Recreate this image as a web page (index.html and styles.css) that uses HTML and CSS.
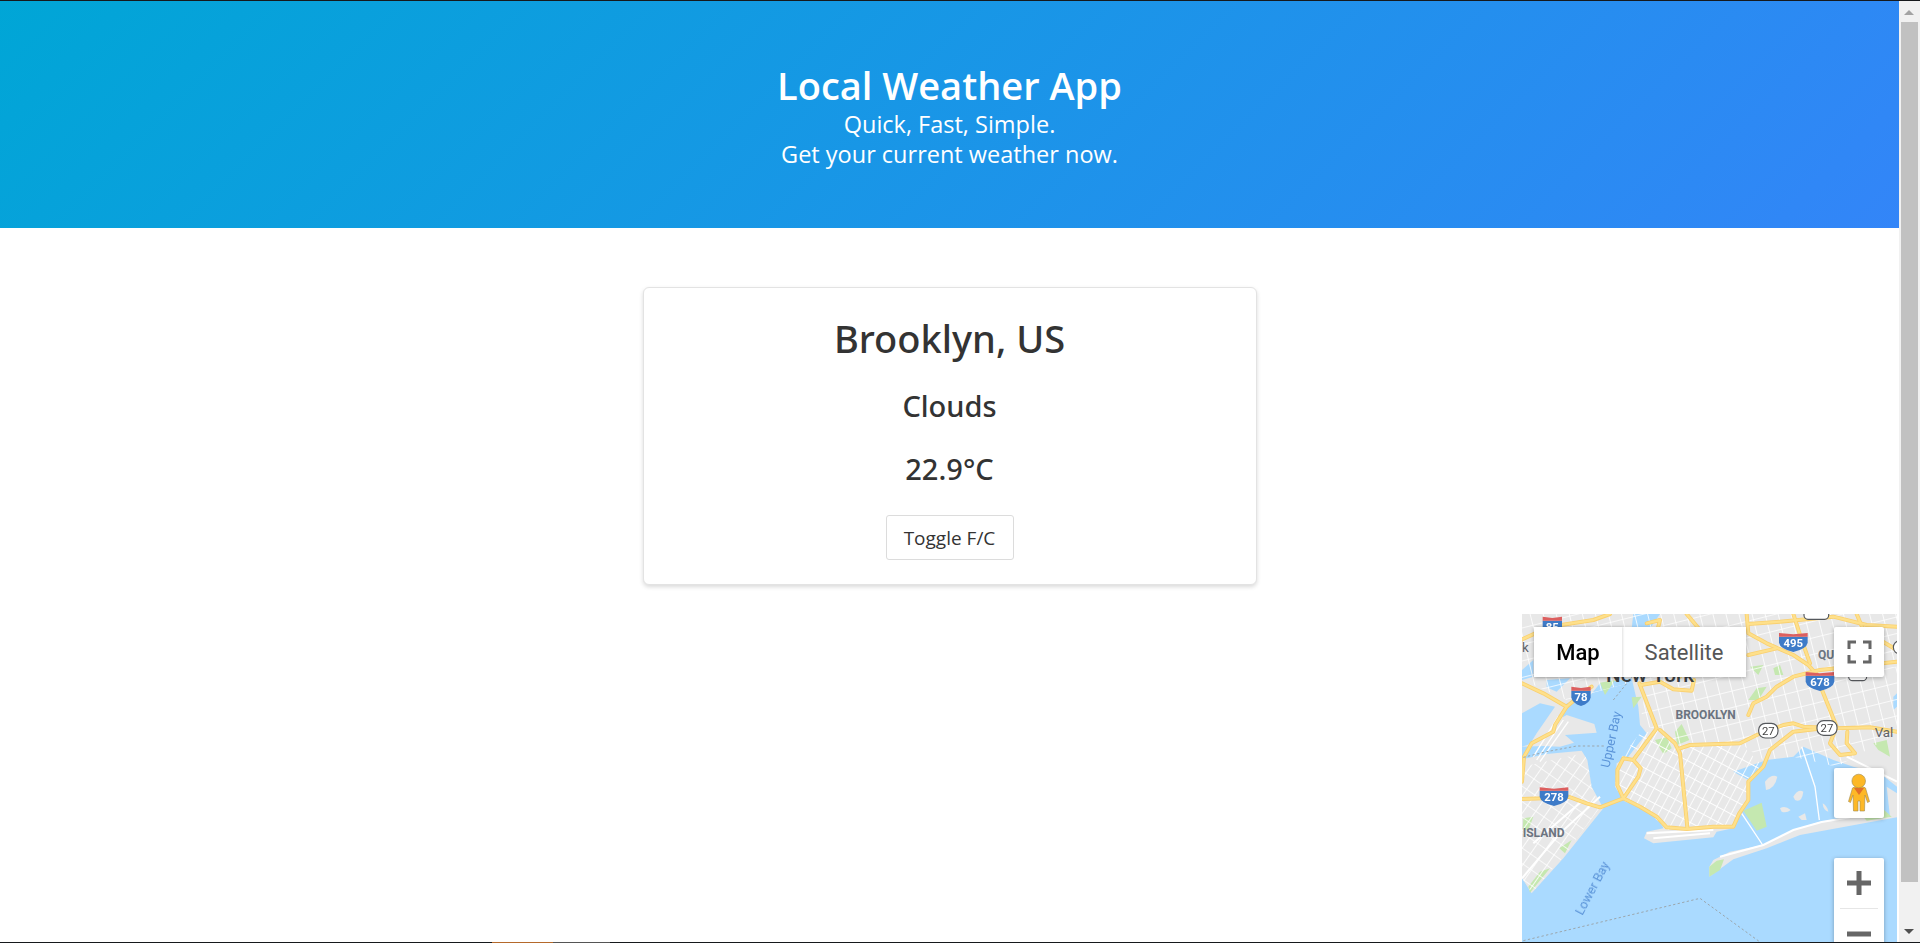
FILE: index.html
```html
<!DOCTYPE html>
<html lang="en">
<head>
<meta charset="utf-8">
<title>Local Weather App</title>
<link rel="stylesheet" href="styles.css">
</head>
<body>
<div class="viewport">
  <div class="page">
    <header class="hero">
      <h1 class="hero-title">Local Weather App</h1>
      <p class="hero-line">Quick, Fast, Simple.</p>
      <p class="hero-line">Get your current weather now.</p>
    </header>
    <main class="content">
      <section class="card">
        <h2 class="city">Brooklyn, US</h2>
        <h3 class="reading">Clouds</h3>
        <h3 class="reading">22.9°C</h3>
        <button class="toggle" type="button">Toggle F/C</button>
      </section>
      <div class="map">
        <svg class="map-art" viewBox="66 42 1125 984" width="375" height="328" aria-hidden="true">
          <defs>
            <pattern id="gridA" width="24" height="40" patternUnits="userSpaceOnUse" patternTransform="rotate(28)">
              <path class="grid-line" d="M0 0H24M0 0V40"/>
            </pattern>
            <pattern id="gridB" width="38" height="48" patternUnits="userSpaceOnUse" patternTransform="rotate(-14)">
              <path class="grid-line" d="M0 0H38M0 0V48"/>
            </pattern>
            <pattern id="gridC" width="30" height="38" patternUnits="userSpaceOnUse" patternTransform="rotate(35)">
              <path class="grid-line" d="M0 0H30M0 0V38"/>
            </pattern>
            <g id="highways">
              <path d="M66 597L130 595 205 590 260 610 300 622 370 595 415 530 422 505 400 480 370 475 352 510 352 555 370 595 420 620 470 650 500 682 560 687 640 680 700 680 718 640 745 600 745 545 790 500 810 450 880 395 950 387"/>
              <path d="M480 390L525 430 540 460 562 682"/>
              <path d="M418 250L470 385 400 480"/>
              <path d="M540 445L570 435 720 430 770 405 850 375 880 370 910 380 1010 385 1110 382 1190 395"/>
              <path d="M960 255L1010 380 990 430 1020 465 1065 460 1040 430 1042 395"/>
              <path d="M745 345L760 310 800 290 830 260 880 230 960 210 1190 185"/>
              <path d="M66 118L150 80 280 60 330 42"/>
              <path d="M740 42L745 100 800 130 880 165 925 195 960 235"/>
              <path d="M745 72L840 65 1000 50 1100 75 1190 80"/>
              <path d="M880 42L905 120 930 190"/>
              <path d="M745 165L830 145"/>
              <path d="M66 250L130 280 200 320 235 290 275 260"/>
              <path d="M200 320L165 375 160 395 95 430 72 470 66 545"/>
              <path d="M422 255L480 245 520 268 575 272 582 240"/>
              <path d="M1070 42L1090 90 1190 150"/>
              <path d="M560 42L600 90 540 230"/>
              <path d="M440 70L480 60 470 100"/>
            </g>
          </defs>
          <rect class="land" x="66" y="42" width="1125" height="984"/>
          <path class="water" d="M66 1026V835L95 880 190 775 310 625 275 560 262 480 245 452 140 462 66 478V440L130 438 180 440 222 428 195 405 290 398 283 372 200 345 188 352 200 310 260 300 300 250 395 235 415 320 420 375 440 400 385 470 350 490 345 560 375 605 430 620 480 660 490 685 440 695 432 715 460 730 640 712 650 695 700 685 720 632 745 590 745 540 700 515 730 505 800 480 880 470 910 440 1000 480 1060 500 1140 520 1191 560V1026Z"/>
          <path class="water" d="M66 340L120 310 165 320 110 400 90 432 66 440Z"/>
          <path class="water" d="M140 240L210 235 170 275 140 262Z"/>
          <path class="water" d="M400 42H480L440 100 395 85Z"/>
          <path class="water" d="M66 210L100 180 100 230 66 240Z"/>
          <path class="water" d="M1180 290L1191 280V320L1180 330Z"/>
          <path class="land" d="M628 800L640 780 690 755 790 735 880 690 960 665 1040 652 1191 645V652L1100 668 900 705 800 745 700 778 628 830Z"/>
          <path class="land" d="M795 545Q815 520 832 530 825 565 798 570Z"/>
          <path class="land" d="M880 590Q895 565 910 575 905 610 885 600Z"/>
          <path class="land" d="M840 625Q855 615 872 630 860 640 845 635Z"/>
          <path class="land" d="M895 650L915 640 920 660 905 660Z"/>
          <path class="land" d="M968 610Q980 615 985 635 970 632 968 610Z"/>
          <path class="land" d="M1160 560L1191 580V650H1170Z"/>
          <path class="park" d="M730 632L785 608 800 680 770 692Z"/>
          <path class="park" d="M628 800L650 782 672 778 660 810 628 830Z"/>
          <path class="park" d="M465 420L500 412 515 445 490 462Z"/>
          <path class="park" d="M545 372L568 420 532 435 525 395Z"/>
          <path class="park" d="M395 292L425 290 400 325Z"/>
          <path class="park" d="M300 248L345 240 315 285Z"/>
          <path class="park" d="M85 860L120 815 150 805 90 878Z"/>
          <path class="park" d="M70 655L100 650 85 690 68 690Z"/>
          <path class="park" d="M178 745L215 720 195 760Z"/>
          <path class="park" d="M1090 650L1150 628 1175 650 1100 662Z"/>
          <path class="park" d="M750 200L790 195 775 225Z"/>
          <path class="park" d="M820 205L840 195 850 225 825 225Z"/>
          <path class="park" d="M770 265L800 260 775 300 745 300Z"/>
          <path class="park" d="M1120 430L1160 420 1170 470 1135 450Z"/>
          <path class="grid-a" d="M420 400L480 390 540 440 720 430 790 500 745 545 745 600 700 680 500 690 430 620 375 605 345 560 350 490Z"/>
          <path class="grid-b" d="M440 240L1191 200V400L1010 500 880 470 790 480 720 430 540 440 480 390 420 375Z"/>
          <path class="grid-c" d="M66 500L250 460 262 480 275 560 300 622 190 770 95 880 66 835Z"/>
          <path class="grid-b" d="M66 42H1191V190L700 230 420 240 200 300 66 240Z"/>
          <path class="road" d="M440 700L640 690M460 715L630 700M660 770L790 735 880 690 965 666 1050 652M66 835L180 700 300 590M100 730L250 600M1040 470L1191 545"/>
          <path class="road-thin" d="M190 360L110 480M175 350L100 470M205 365L120 485M790 738L725 640M958 660L945 560 905 440"/>
          <use href="#highways" class="hwy-case"/>
          <use href="#highways" class="hwy-fill"/>
          <path class="boundary" d="M70 472L140 455 230 438 312 438M340 300L395 232M70 1022L600 895 780 1026"/>
          <text class="label label-dark" x="450" y="246" text-anchor="middle">New York</text>
          <text class="label label-bold" x="617" y="358" text-anchor="middle">BROOKLYN</text>
          <text class="label label-bold" x="954" y="178">QU</text>
          <text class="label label-bold" x="68" y="711">ISLAND</text>
          <text class="label label-place" x="1124" y="412">Val</text>
          <text class="label label-place" x="66" y="157">k</text>
          <text class="label label-water" transform="translate(328 505) rotate(-78)">Upper Bay</text>
          <text class="label label-water" transform="translate(247 948) rotate(-62)">Lower Bay</text>
          <g>
            <path class="shield-blue" d="M128 62H186V82Q184 100 157 108 130 100 128 82Z"/>
            <path class="shield-red" d="M128 50L157 54 186 50V62H128Z"/>
            <text class="shield-text" x="157" y="92" text-anchor="middle">85</text>
          </g>
          <g>
            <path class="shield-blue" d="M214 272H272V292Q270 310 243 318 216 310 214 292Z"/>
            <path class="shield-red" d="M214 260L243 264 272 260V272H214Z"/>
            <text class="shield-text" x="243" y="302" text-anchor="middle">78</text>
          </g>
          <g>
            <path class="shield-blue" d="M119 572H205V590Q202 608 162 618 122 608 119 590Z"/>
            <path class="shield-red" d="M119 562L162 566 205 562V572H119Z"/>
            <text class="shield-text" x="162" y="604" text-anchor="middle">278</text>
          </g>
          <g>
            <path class="shield-blue" d="M837 110H923V128Q920 146 880 156 840 146 837 128Z"/>
            <path class="shield-red" d="M837 99L880 103 923 99V110H837Z"/>
            <text class="shield-text" x="880" y="142" text-anchor="middle">495</text>
          </g>
          <g>
            <path class="shield-blue" d="M917 227H1003V245Q1000 263 960 273 920 263 917 245Z"/>
            <path class="shield-red" d="M917 216L960 220 1003 216V227H917Z"/>
            <text class="shield-text" x="960" y="259" text-anchor="middle">678</text>
          </g>
          <g>
            <rect class="route" x="776" y="370" width="58" height="44" rx="20"/>
            <text class="route-text" x="805" y="404" text-anchor="middle">27</text>
          </g>
          <g>
            <rect class="route" x="951" y="362" width="60" height="44" rx="20"/>
            <text class="route-text" x="981" y="396" text-anchor="middle">27</text>
          </g>
          <g>
            <rect class="route" x="912" y="30" width="74" height="28" rx="12"/>
          </g>
          <g>
            <rect class="route" x="1046" y="212" width="54" height="30" rx="12"/>
          </g>
          <circle class="route" cx="1200" cy="142" r="20"/>
        </svg>
        <div class="map-type">
          <button class="map-type-btn is-active" type="button">Map</button>
          <button class="map-type-btn" type="button">Satellite</button>
        </div>
        <button class="map-ctl fullscreen" type="button" aria-label="Toggle fullscreen view">
          <svg viewBox="0 0 50 50" width="50" height="50"><path class="ctl-stroke" d="M15 22V15H22M29 15H36V22M36 28V35H29M22 35H15V28"/></svg>
        </button>
        <button class="map-ctl pegman" type="button" aria-label="Street View">
          <svg viewBox="0 0 50 50" width="50" height="50">
            <path class="peg-body" d="M18.500 20Q20 18.500 25 18.500 30 18.500 31.500 20L35.500 33.500 33.500 34.500 31 27 30.500 43H26V33H24V43H19.500L19 27 16.500 34.500 14.500 33.500Z"/>
            <circle class="peg-body" cx="24.700" cy="13" r="6.800"/>
            <path class="peg-neck" d="M20 20H30L25 27Z"/>
          </svg>
        </button>
        <div class="zoom-ctl">
          <button class="zoom-btn" type="button" aria-label="Zoom in">
            <svg viewBox="0 0 24 24" width="24" height="24"><path class="ctl-fill" d="M9.500 0H14.500V9.500H24V14.500H14.500V24H9.500V14.500H0V9.500H9.500Z"/></svg>
          </button>
          <span class="zoom-rule"></span>
          <button class="zoom-btn" type="button" aria-label="Zoom out">
            <svg viewBox="0 0 24 24" width="24" height="24"><path class="ctl-fill" d="M0 9.500H24V14.500H0Z"/></svg>
          </button>
        </div>
      </div>
    </main>
  </div>
  <div class="scrollbar" aria-hidden="true">
    <span class="arrow arrow-up"></span>
    <span class="thumb"></span>
    <span class="arrow arrow-down"></span>
  </div>
</div>
<div class="edge-bar" aria-hidden="true">
  <span class="edge-orange"></span>
  <span class="edge-grey"></span>
</div>
</body>
</html>
```

FILE: styles.css
```css
* { box-sizing: border-box; }

html, body {
  margin: 0;
  height: 943px;
  overflow: hidden;
  background: #fff;
  font-family: "Open Sans", "Noto Sans", sans-serif;
  color: #333;
}

.viewport {
  display: flex;
  height: 943px;
  border-top: 1px solid #16191c;
  overflow: hidden;
}

.page {
  flex: 1;
  min-width: 0;
}

.hero {
  height: 227px;
  padding-top: 61px;
  background: linear-gradient(135deg, #00a6d6, #3385f8);
  color: #fff;
  text-align: center;
}

.hero-title {
  margin: 0;
  font-size: 38px;
  font-weight: 600;
  line-height: 47px;
}

.hero-line {
  margin: 0;
  font-size: 23.5px;
  font-weight: 400;
  line-height: 30px;
}

.content {
  padding-top: 59px;
}

.card {
  display: flex;
  flex-direction: column;
  align-items: center;
  width: 614px;
  height: 298px;
  margin: 0 auto;
  padding-top: 25px;
  border: 1px solid #e3e3e3;
  border-radius: 6px;
  box-shadow: 0 2px 4px rgba(0, 0, 0, 0.15);
  background: #fff;
}

.city,
.reading {
  font-family: "Noto Sans", "Open Sans", sans-serif;
  font-weight: 500;
}

.city {
  margin: 0;
  font-size: 38px;
  line-height: 50px;
}

.reading {
  margin: 26px 0 0;
  font-size: 29px;
  line-height: 33px;
}

.reading + .reading {
  margin-top: 30px;
}

.toggle {
  width: 128px;
  height: 45px;
  margin-top: 30px;
  padding: 0;
  border: 1px solid #dcdcdc;
  border-radius: 3px;
  background: #fff;
  color: #333;
  font-family: inherit;
  font-size: 19px;
}

.map {
  position: relative;
  width: 375px;
  height: 400px;
  margin: 29px 2px 0 auto;
  overflow: hidden;
  background: #aadaff;
}

.map-art {
  display: block;
  filter: blur(0.4px);
}

.land { fill: #e8e8e8; }
.water { fill: #aadaff; }
.park { fill: #c5e8b0; }
.grid-line { fill: none; stroke: #fff; stroke-width: 5; }
.grid-a { fill: url(#gridA); }
.grid-b { fill: url(#gridB); }
.grid-c { fill: url(#gridC); }
.road { fill: none; stroke: #fff; stroke-width: 6; }
.road-thin { fill: none; stroke: #fff; stroke-width: 4; }
.hwy-case, .hwy-fill { fill: none; stroke-linejoin: round; stroke-linecap: round; }
.hwy-case { stroke: #fad06f; stroke-width: 12; }
.hwy-fill { stroke: #fee08b; stroke-width: 7; }
.boundary { fill: none; stroke: #9ba6ac; stroke-width: 3; stroke-dasharray: 7 7; }

.label { font-family: Roboto, sans-serif; }
.label-dark { font-size: 62px; font-weight: 500; fill: #3c4043; }
.label-bold { font-size: 36px; font-weight: 700; fill: #6b7480; }
.label-place { font-size: 40px; fill: #5f6368; }
.label-water { font-size: 38px; fill: #5a93d8; }

.shield-blue { fill: #3e7bc8; }
.shield-red { fill: #dc5f5f; }
.shield-text { font-family: Roboto, sans-serif; font-size: 34px; font-weight: 700; fill: #fff; }
.route { fill: #fff; stroke: #55585c; stroke-width: 3.5; }
.route-text { font-family: Roboto, sans-serif; font-size: 34px; fill: #444; }

.map-type {
  position: absolute;
  top: 13px;
  left: 12px;
  display: flex;
  height: 50px;
  box-shadow: 0 1px 4px rgba(0, 0, 0, 0.3);
}

.map-type-btn {
  width: 124px;
  padding: 0;
  border: 0;
  background: #fff;
  color: #565656;
  font-family: Roboto, sans-serif;
  font-size: 22px;
}

.map-type-btn.is-active {
  position: relative;
  width: 88px;
  color: #000;
  font-weight: 500;
  box-shadow: 1px 0 2px rgba(0, 0, 0, 0.12);
}

.map-ctl {
  position: absolute;
  left: 312px;
  width: 50px;
  height: 50px;
  padding: 0;
  border: 0;
  border-radius: 2px;
  background: #fff;
  box-shadow: 0 1px 4px rgba(0, 0, 0, 0.3);
}

.map-ctl svg { display: block; }

.fullscreen { top: 13px; }
.pegman { top: 154px; }

.ctl-stroke { fill: none; stroke: #666; stroke-width: 3; }
.ctl-fill { fill: #666; }
.peg-body { fill: #fdb827; stroke: #a08a50; stroke-width: 0.6; }
.peg-neck { fill: #e2702a; }

.zoom-ctl {
  position: absolute;
  top: 244px;
  left: 312px;
  display: flex;
  flex-direction: column;
  align-items: center;
  width: 50px;
  height: 101px;
  border-radius: 2px;
  background: #fff;
  box-shadow: 0 1px 4px rgba(0, 0, 0, 0.3);
}

.zoom-btn {
  display: flex;
  align-items: center;
  justify-content: center;
  width: 50px;
  height: 50px;
  padding: 0;
  border: 0;
  background: none;
}

.zoom-rule {
  flex: none;
  width: 38px;
  height: 1px;
  background: #e6e6e6;
}

.scrollbar {
  position: relative;
  flex: none;
  display: flex;
  flex-direction: column;
  align-items: center;
  width: 21px;
  background: #f1f1f1;
}

.thumb {
  position: absolute;
  top: 21px;
  left: 2px;
  width: 17px;
  height: 860px;
  background: #c1c1c1;
}

.arrow {
  position: absolute;
  left: 5px;
  width: 0;
  height: 0;
  border-left: 5px solid transparent;
  border-right: 5px solid transparent;
}

.arrow-up { top: 9px; border-bottom: 5px solid #a3a3a3; }
.arrow-down { bottom: 9px; border-top: 5px solid #505050; }

.edge-bar {
  position: fixed;
  left: 0;
  right: 0;
  bottom: 0;
  display: flex;
  height: 1px;
  padding-left: 492px;
  background: #16191c;
}

.edge-orange { width: 61px; background: #b5692b; }
.edge-grey { width: 57px; background: #555; }
```
